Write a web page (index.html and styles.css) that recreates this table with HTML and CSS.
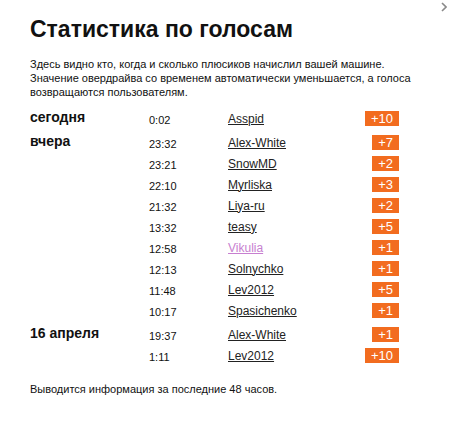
FILE: index.html
```html
<!DOCTYPE html>
<html lang="ru">
<head>
    <meta charset="UTF-8">
    <title>Статистика по голосам</title>
    <link rel="stylesheet" href="styles.css">
</head>
<body>
    <svg class="close" width="6" height="10" viewBox="0 0 6 10">
        <polyline points="1,1 5,5 1,9" fill="none" stroke="#8a8a8a" stroke-width="1.6"/>
    </svg>

    <h1 class="title">Статистика по голосам</h1>

    <p class="intro">
        Здесь видно кто, когда и сколько плюсиков начислил вашей машине.<br>
        Значение овердрайва со временем автоматически уменьшается, а голоса<br>
        возвращаются пользователям.
    </p>

    <div class="votes">
        <div class="day">
            <div class="day-label">сегодня</div>
            <div class="day-rows">
                <div class="row"><span class="time">0:02</span><a class="name" href="#">Asspid</a><span class="badge">+10</span></div>
            </div>
        </div>

        <div class="day">
            <div class="day-label">вчера</div>
            <div class="day-rows">
                <div class="row"><span class="time">23:32</span><a class="name" href="#">Alex-White</a><span class="badge">+7</span></div>
                <div class="row"><span class="time">23:21</span><a class="name" href="#">SnowMD</a><span class="badge">+2</span></div>
                <div class="row"><span class="time">22:10</span><a class="name" href="#">Myrliska</a><span class="badge">+3</span></div>
                <div class="row"><span class="time">21:32</span><a class="name" href="#">Liya-ru</a><span class="badge">+2</span></div>
                <div class="row"><span class="time">13:32</span><a class="name" href="#">teasy</a><span class="badge">+5</span></div>
                <div class="row"><span class="time">12:58</span><a class="name visited" href="#">Vikulia</a><span class="badge">+1</span></div>
                <div class="row"><span class="time">12:13</span><a class="name" href="#">Solnychko</a><span class="badge">+1</span></div>
                <div class="row"><span class="time">11:48</span><a class="name" href="#">Lev2012</a><span class="badge">+5</span></div>
                <div class="row"><span class="time">10:17</span><a class="name" href="#">Spasichenko</a><span class="badge">+1</span></div>
            </div>
        </div>

        <div class="day">
            <div class="day-label">16 апреля</div>
            <div class="day-rows">
                <div class="row"><span class="time">19:37</span><a class="name" href="#">Alex-White</a><span class="badge">+1</span></div>
                <div class="row"><span class="time">1:11</span><a class="name" href="#">Lev2012</a><span class="badge">+10</span></div>
            </div>
        </div>
    </div>

    <p class="note">Выводится информация за последние 48 часов.</p>
</body>
</html>
```

FILE: styles.css
```css
* {
    margin: 0;
    padding: 0;
    box-sizing: border-box;
}

body {
    position: relative;
    font-family: "Liberation Sans", Arial, sans-serif;
    background: #fff;
    color: #111;
    padding: 16px 51px 0 30px;
}

.close {
    position: absolute;
    top: 2px;
    right: 3px;
}

.title {
    font-size: 23px;
    font-weight: bold;
    line-height: 27px;
}

.intro {
    margin-top: 14px;
    font-size: 11px;
    line-height: 14px;
    white-space: nowrap;
}

.votes {
    margin-top: 9px;
}

.day {
    display: flex;
    margin-bottom: 3px;
}

.day-label {
    width: 119px;
    font-size: 14px;
    font-weight: bold;
    line-height: 19px;
}

.day-rows {
    flex: 1;
}

.row {
    display: flex;
    align-items: center;
    height: 21px;
}

.time {
    width: 79px;
    font-size: 11px;
    padding-top: 3px;
}

.name {
    flex: 1;
    font-size: 12px;
    color: #222;
    text-decoration: underline;
}

.name.visited {
    color: #c77fd0;
}

.badge {
    height: 15px;
    line-height: 15px;
    padding: 0 6px;
    font-size: 13px;
    color: #fff;
    background: #f26c1f;
}

.note {
    margin-top: 17px;
    font-size: 11px;
}
```
